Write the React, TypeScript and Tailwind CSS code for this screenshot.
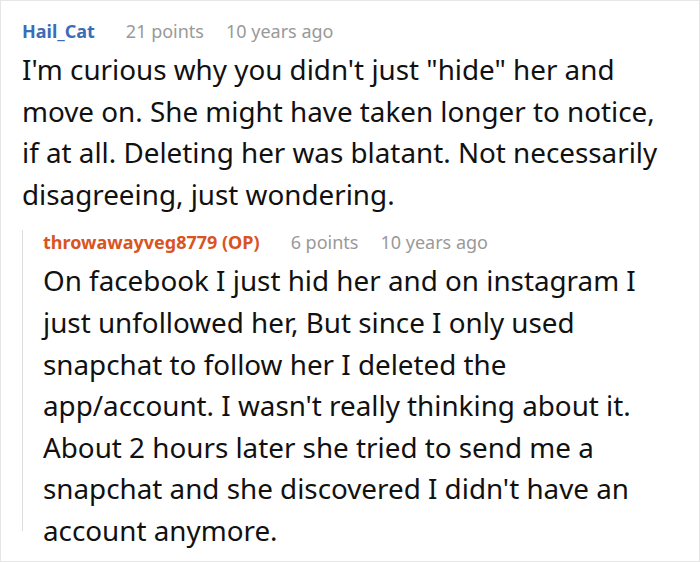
import React from "react";

const top = [
  `I'm curious why you didn't just "hide" her and`,
  `move on. She might have taken longer to notice,`,
  `if at all. Deleting her was blatant. Not necessarily`,
  `disagreeing, just wondering.`,
];

const reply = [
  `On facebook I just hid her and on instagram I`,
  `just unfollowed her, But since I only used`,
  `snapchat to follow her I deleted the`,
  `app/account. I wasn't really thinking about it.`,
  `About 2 hours later she tried to send me a`,
  `snapchat and she discovered I didn't have an`,
  `account anymore.`,
];

export default function App() {
  const font = { fontFamily: '"Noto Sans", "Open Sans", sans-serif' };
  return (
    <div
      style={font}
      className="w-[700px] h-[562px] bg-white border border-[#e6e6e6] pl-[21px] pt-[18px] overflow-hidden"
    >
      <div className="flex items-center h-[24px] text-[18px] leading-[24px] whitespace-nowrap">
        <span className="font-bold text-[#3b6cb6]">Hail_Cat</span>
        <span className="ml-[31px] text-[#999999]">21 points</span>
        <span className="ml-[22px] text-[#999999]">10 years ago</span>
      </div>
      <div className="mt-[6px] text-[27.8px] leading-[41.6px] text-[#111111] whitespace-nowrap">
        {top.map((l) => (
          <div key={l}>{l}</div>
        ))}
      </div>
      <div className="mt-[26px] border-l border-[#dddddd] pl-[20px] h-[301px]">
        <div className="-mt-[11px] flex items-center h-[24px] text-[18px] leading-[24px] whitespace-nowrap">
          <span className="font-bold text-[#d9541f]">throwawayveg8779 (OP)</span>
          <span className="ml-[31px] text-[#999999]">6 points</span>
          <span className="ml-[22px] text-[#999999]">10 years ago</span>
        </div>
        <div className="mt-[6px] text-[27.8px] leading-[41.6px] text-[#111111] whitespace-nowrap">
          {reply.map((l) => (
            <div key={l}>{l}</div>
          ))}
        </div>
      </div>
    </div>
  );
}
